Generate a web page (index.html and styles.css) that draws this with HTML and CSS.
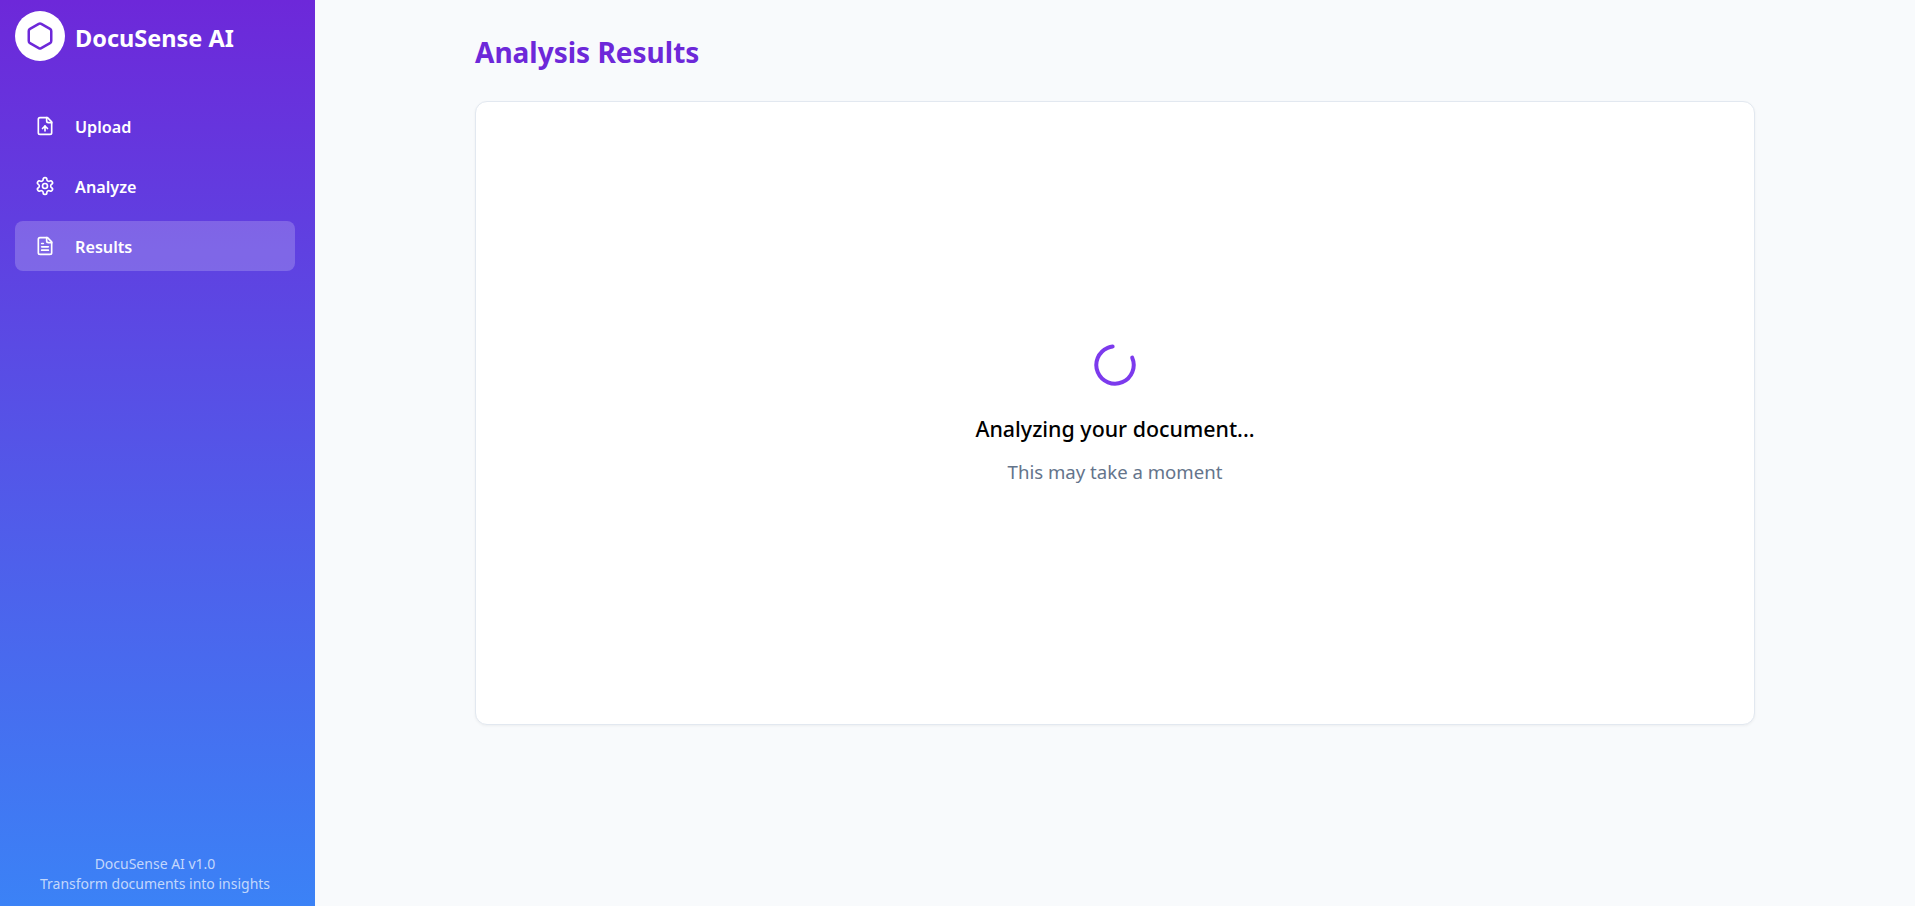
FILE: index.html
```html
<!DOCTYPE html>
<html lang="en">
<head>
  <meta charset="UTF-8" />
  <title>DocuSense AI</title>
  <link rel="stylesheet" href="styles.css">
</head>
<body>
  <aside class="sidebar">
    <div class="brand">
      <div class="brand-logo">
        <svg width="30" height="30" viewBox="0 0 24 24" fill="none" stroke="#6d28d9" stroke-width="2" stroke-linecap="round" stroke-linejoin="round">
          <path d="M21 16V8a2 2 0 0 0-1-1.73l-7-4a2 2 0 0 0-2 0l-7 4A2 2 0 0 0 3 8v8a2 2 0 0 0 1 1.73l7 4a2 2 0 0 0 2 0l7-4A2 2 0 0 0 21 16z"/>
        </svg>
      </div>
      <span class="brand-name">DocuSense AI</span>
    </div>

    <nav class="nav">
      <a class="nav-item">
        <svg class="nav-icon" viewBox="0 0 24 24">
          <path d="M15 2H6a2 2 0 0 0-2 2v16a2 2 0 0 0 2 2h12a2 2 0 0 0 2-2V7z"/>
          <path d="M14 2v4a2 2 0 0 0 2 2h4"/>
          <path d="M12 18v-6"/>
          <path d="m9 15 3-3 3 3"/>
        </svg>
        <span>Upload</span>
      </a>
      <a class="nav-item">
        <svg class="nav-icon" viewBox="0 0 24 24">
          <path d="M12.22 2h-.44a2 2 0 0 0-2 2v.18a2 2 0 0 1-1 1.73l-.43.25a2 2 0 0 1-2 0l-.15-.08a2 2 0 0 0-2.73.73l-.22.38a2 2 0 0 0 .73 2.73l.15.1a2 2 0 0 1 1 1.72v.51a2 2 0 0 1-1 1.74l-.15.09a2 2 0 0 0-.73 2.73l.22.38a2 2 0 0 0 2.73.73l.15-.08a2 2 0 0 1 2 0l.43.25a2 2 0 0 1 1 1.73V20a2 2 0 0 0 2 2h.44a2 2 0 0 0 2-2v-.18a2 2 0 0 1 1-1.73l.43-.25a2 2 0 0 1 2 0l.15.08a2 2 0 0 0 2.73-.73l.22-.39a2 2 0 0 0-.73-2.73l-.15-.08a2 2 0 0 1-1-1.74v-.5a2 2 0 0 1 1-1.74l.15-.09a2 2 0 0 0 .73-2.73l-.22-.38a2 2 0 0 0-2.73-.73l-.15.08a2 2 0 0 1-2 0l-.43-.25a2 2 0 0 1-1-1.73V4a2 2 0 0 0-2-2z"/>
          <circle cx="12" cy="12" r="3"/>
        </svg>
        <span>Analyze</span>
      </a>
      <a class="nav-item active">
        <svg class="nav-icon" viewBox="0 0 24 24">
          <path d="M15 2H6a2 2 0 0 0-2 2v16a2 2 0 0 0 2 2h12a2 2 0 0 0 2-2V7z"/>
          <path d="M14 2v4a2 2 0 0 0 2 2h4"/>
          <path d="M16 13H8"/>
          <path d="M16 17H8"/>
          <path d="M10 9H8"/>
        </svg>
        <span>Results</span>
      </a>
    </nav>

    <div class="sidebar-footer">
      <div>DocuSense AI v1.0</div>
      <div>Transform documents into insights</div>
    </div>
  </aside>

  <main class="main">
    <div class="content">
      <h1 class="page-title">Analysis Results</h1>
      <section class="card">
        <svg class="spinner" width="48" height="48" viewBox="0 0 48 48">
          <circle cx="24" cy="24" r="18.7" pathLength="360" transform="rotate(-23 24 24)"/>
        </svg>
        <h2 class="loading-title">Analyzing your document...</h2>
        <p class="loading-sub">This may take a moment</p>
      </section>
    </div>
  </main>
</body>
</html>
```

FILE: styles.css
```css
* {
  box-sizing: border-box;
}

body {
  margin: 0;
  height: 906px;
  display: flex;
  overflow: hidden;
  background: #f8fafc;
  font-family: 'Noto Sans', 'Open Sans', sans-serif;
}

.sidebar {
  width: 315px;
  flex-shrink: 0;
  display: flex;
  flex-direction: column;
  padding: 11px 20px 12px 15px;
  background: linear-gradient(180deg, #6d28d9, #3b82f6);
  color: #fff;
}

.brand {
  display: flex;
  align-items: center;
  gap: 10px;
  margin-bottom: 40px;
}

.brand-logo {
  width: 50px;
  height: 50px;
  border-radius: 50%;
  background: #fff;
  display: flex;
  align-items: center;
  justify-content: center;
}

.brand-name {
  padding-top: 4px;
  font-size: 23.5px;
  font-weight: 700;
}

.nav {
  display: flex;
  flex-direction: column;
  gap: 10px;
  flex-grow: 1;
}

.nav-item {
  height: 50px;
  display: flex;
  align-items: center;
  gap: 20px;
  padding: 2px 0 0 20px;
  border-radius: 8px;
  font-size: 16.2px;
  font-weight: 600;
  color: #fff;
}

.nav-item.active {
  background: rgba(255, 255, 255, 0.2);
}

.nav-icon {
  width: 20px;
  height: 20px;
  margin-top: -3px;
  fill: none;
  stroke: #fff;
  stroke-width: 2;
  stroke-linecap: round;
  stroke-linejoin: round;
}

.sidebar-footer {
  text-align: center;
  font-size: 14px;
  line-height: 20px;
  color: rgba(255, 255, 255, 0.7);
}

.main {
  flex-grow: 1;
  display: flex;
  justify-content: center;
  padding-top: 34px;
}

.content {
  width: 1280px;
}

.page-title {
  margin: 0 0 30px;
  font-size: 28px;
  line-height: 37px;
  font-weight: 700;
  color: #6d28d9;
}

.card {
  height: 624px;
  display: flex;
  flex-direction: column;
  align-items: center;
  justify-content: center;
  background: #fff;
  border: 1px solid #e2e8f0;
  border-radius: 12px;
  box-shadow: 0 1px 3px rgba(0, 0, 0, 0.05);
}

.spinner circle {
  fill: none;
  stroke: #7c3aed;
  stroke-width: 4;
  stroke-linecap: round;
  stroke-dasharray: 286 74;
}

.loading-title {
  margin: 26px 0 0;
  font-size: 21.4px;
  line-height: 28px;
  font-weight: 500;
  color: #000;
}

.loading-sub {
  margin: 15px 0 0;
  font-size: 18.6px;
  line-height: 28px;
  color: #64748b;
}
```
